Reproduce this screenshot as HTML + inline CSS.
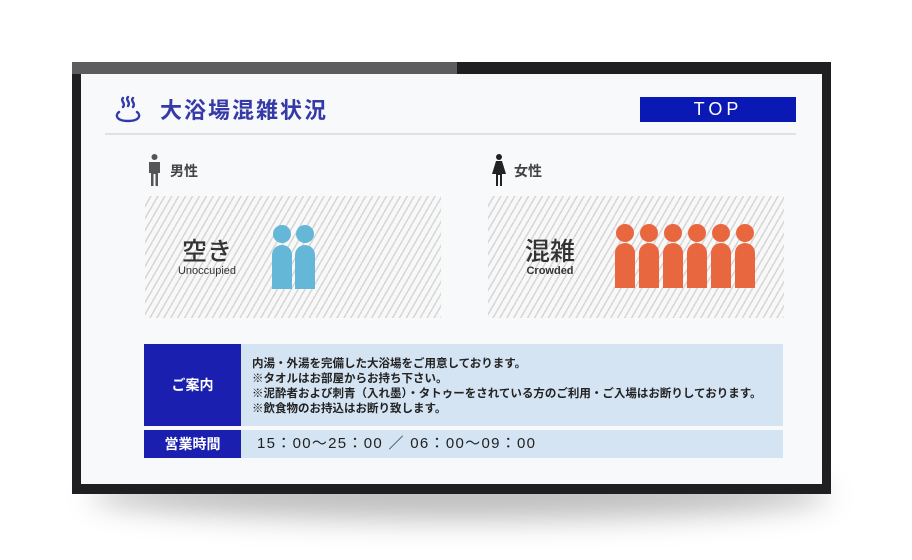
<!DOCTYPE html>
<html><head><meta charset="utf-8"><style>
*{margin:0;padding:0;box-sizing:border-box}
body{width:912px;height:560px;background:#fff;position:relative;overflow:hidden;font-family:"Liberation Sans","Noto Sans CJK JP",sans-serif}
.shadow{position:absolute;left:90px;top:470px;width:740px;height:50px;border-radius:50%;background:rgba(0,0,0,.25);filter:blur(14px)}
.bezel{position:absolute;left:72px;top:62px;width:759px;height:432px;background:#1f1f21}
.topl{position:absolute;left:72px;top:62px;width:385px;height:12px;background:#5c5c5e}
.screen{position:absolute;left:81px;top:74px;width:741px;height:410px;background:#f8f9fb}
.abs{position:absolute}
.title{left:160px;top:93px;font-size:22px;color:#353aa8;letter-spacing:2px;font-weight:bold}
.top{left:640px;top:97px;width:156px;height:25px;background:#0b19b4;color:#fff;font-size:18px;letter-spacing:4px;text-align:center;line-height:25px}
.hr{left:105px;top:133px;width:691px;height:2px;background:#dfe1e4}
.lbl{font-size:14px;font-weight:bold;color:#444}
.panel{width:296px;height:122px;top:196px;background:repeating-linear-gradient(120deg,#f8f8f8 0 4.5px,#d6d6d6 4.5px 6px)}
.big{font-size:25px;color:#333;text-align:center;width:100px;font-weight:500}
.small{font-size:11px;color:#333;text-align:center;width:100px;font-weight:bold}
.info{left:241px;top:344px;width:542px;height:82px;background:#d5e4f3;font-size:11.5px;color:#222;padding:13px 0 0 11px;line-height:15px;font-weight:bold}
.hl{left:144px;width:97px;background:#1a1fb0;color:#fff;text-align:center;font-size:14px;font-weight:bold}
.hours{left:241px;top:430px;width:542px;height:28px;background:#d5e4f3;font-size:15px;color:#222;line-height:28px;padding-left:16px;letter-spacing:1.3px}
</style></head><body>
<div class="shadow"></div>
<div class="bezel"></div><div class="topl"></div>
<div class="screen"></div>
<svg class="abs" style="left:113px;top:94px" width="30" height="32" viewBox="0 0 30 32" fill="none" stroke="#353aa8" stroke-width="2.4" stroke-linecap="round">
<path d="M10 4c-3 3 3 5 0 9M15 3c-3 3 3 5 0 9M20 4c-3 3 3 5 0 9"/><path d="M6 18c-4 3-3 9 9 9s13-6 9-9"/></svg>
<div class="abs title">大浴場混雑状況</div>
<div class="abs top">TOP</div>
<div class="abs hr"></div>
<svg class="abs" style="left:148px;top:154px" width="13" height="32" viewBox="0 0 13 32" fill="#555"><circle cx="6.5" cy="3" r="3"/><path d="M1 8h11v11h-2v13H7.5V20h-2v12H3V19H1z"/></svg>
<div class="abs lbl" style="left:170px;top:161px">男性</div>
<svg class="abs" style="left:491px;top:154px" width="16" height="32" viewBox="0 0 16 32" fill="#222"><circle cx="8" cy="3" r="3"/><path d="M5 7h6l4 13H11v12H9V21H7v11H5V20H1z"/></svg>
<div class="abs lbl" style="left:514px;top:161px">女性</div>
<div class="abs panel" style="left:145px"></div>
<div class="abs panel" style="left:488px"></div>
<div class="abs big" style="left:157px;top:232px">空き</div>
<div class="abs small" style="left:157px;top:265px;font-weight:normal">Unoccupied</div>
<div class="abs big" style="left:500px;top:232px">混雑</div>
<div class="abs small" style="left:500px;top:265px">Crowded</div>
<svg class="abs" style="left:271px;top:224px" width="48" height="66" fill="#65b7d7">
<circle cx="11" cy="10" r="9"/><path d="M1 31a10 10 0 0 1 20 0v34H1z"/>
<circle cx="34" cy="10" r="9"/><path d="M24 31a10 10 0 0 1 20 0v34H24z"/></svg>
<svg class="abs" style="left:614px;top:224px" width="142" height="66" fill="#e9673f">
<g id="p"><circle cx="11" cy="9" r="9"/><path d="M1 29a10 10 0 0 1 20 0v35H1z"/></g>
<use href="#p" x="24"/><use href="#p" x="48"/><use href="#p" x="72"/><use href="#p" x="96"/><use href="#p" x="120"/></svg>
<div class="abs hl" style="top:344px;height:82px;line-height:82px">ご案内</div>
<div class="abs info">内湯・外湯を完備した大浴場をご用意しております。<br>※タオルはお部屋からお持ち下さい。<br>※泥酔者および刺青（入れ墨）・タトゥーをされている方のご利用・ご入場はお断りしております。<br>※飲食物のお持込はお断り致します。</div>
<div class="abs hl" style="top:430px;height:28px;line-height:28px">営業時間</div>
<div class="abs hours">15：00～25：00 ／ 06：00～09：00</div>
</body></html>
